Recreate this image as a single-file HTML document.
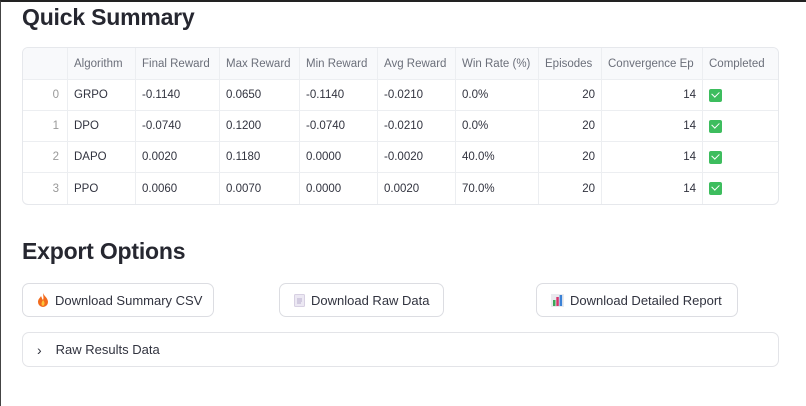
<!DOCTYPE html>
<html><head><meta charset="utf-8"><style>
*{box-sizing:border-box;margin:0;padding:0}
body{width:806px;height:406px;background:#fff;font-family:"Liberation Sans",sans-serif;color:#31333f;position:relative;overflow:hidden;border-top:2px solid #222;border-left:1px solid #444}
h1{position:absolute;left:21px;font-size:23px;font-weight:bold;color:#262730;letter-spacing:-0.2px}
table{position:absolute;left:21px;top:45px;border-collapse:separate;border-spacing:0;border:1px solid #e6e8ec;border-radius:6px;font-size:11.5px;overflow:hidden;width:755px;table-layout:fixed}
td,th{border-right:1px solid #eceef1;border-bottom:1px solid #eceef1;height:31px;padding:0 6px;text-align:left;white-space:nowrap;overflow:hidden}
th{font-weight:normal;color:#6b6f7a;background:#f8f9fb;height:32px}
tr:last-child td{border-bottom:none}
td:last-child,th:last-child{border-right:none}
.r{text-align:right}
.i{color:#999;text-align:right;padding-right:8px}
.ck{display:inline-block;width:13px;height:13px;background:#3dbd5e;border-radius:2px;position:relative;vertical-align:middle}
.ck:after{content:"";position:absolute;left:3px;top:2px;width:6px;height:4px;border-left:1.5px solid #fff;border-bottom:1.5px solid #fff;transform:rotate(-45deg)}
.btn{position:absolute;top:281px;height:34px;border:1px solid #dcdde2;border-radius:7px;font-size:13px;display:flex;align-items:center;padding-left:14px;gap:6px;color:#31333f}
.exp{position:absolute;left:21px;top:330px;width:757px;height:35px;border:1px solid #e3e4e8;border-radius:7px;font-size:13px;display:flex;align-items:center;padding-left:14px}
</style></head><body>
<h1 style="top:2px">Quick Summary</h1>
<table>
<colgroup><col style="width:45px"><col style="width:68px"><col style="width:84px"><col style="width:80px"><col style="width:78px"><col style="width:78px"><col style="width:83px"><col style="width:63px"><col style="width:101px"><col style="width:75px"></colgroup>
<tr><th></th><th>Algorithm</th><th>Final Reward</th><th>Max Reward</th><th>Min Reward</th><th>Avg Reward</th><th>Win Rate (%)</th><th>Episodes</th><th>Convergence Ep</th><th>Completed</th></tr>
<tr><td class="i">0</td><td>GRPO</td><td>-0.1140</td><td>0.0650</td><td>-0.1140</td><td>-0.0210</td><td>0.0%</td><td class="r">20</td><td class="r">14</td><td><span class="ck"></span></td></tr>
<tr><td class="i">1</td><td>DPO</td><td>-0.0740</td><td>0.1200</td><td>-0.0740</td><td>-0.0210</td><td>0.0%</td><td class="r">20</td><td class="r">14</td><td><span class="ck"></span></td></tr>
<tr><td class="i">2</td><td>DAPO</td><td>0.0020</td><td>0.1180</td><td>0.0000</td><td>-0.0020</td><td>40.0%</td><td class="r">20</td><td class="r">14</td><td><span class="ck"></span></td></tr>
<tr><td class="i">3</td><td>PPO</td><td>0.0060</td><td>0.0070</td><td>0.0000</td><td>0.0020</td><td>70.0%</td><td class="r">20</td><td class="r">14</td><td><span class="ck"></span></td></tr>
</table>
<h1 style="top:236px">Export Options</h1>
<div class="btn" style="left:21px;width:192px"><svg width="12" height="14" viewBox="0 0 12 14"><path d="M6 0C7 3 11 5 11 9A5 5 0 0 1 1 9C1 6 3 5 4 3C5 5 5 6 6 7C7 5 6 2 6 0Z" fill="#f26b1d"/><path d="M6 7C8 9 8 12 6 13C4 12 4 10 6 7Z" fill="#fcc33a"/></svg>Download Summary CSV</div>
<div class="btn" style="left:278px;width:165px"><svg width="11" height="13" viewBox="0 0 11 13"><rect x="0.5" y="0.5" width="10" height="12" rx="1" fill="#ece8f3" stroke="#d7d0e2"/><path d="M3 5H8M3 7H8M3 9H7" stroke="#b9aece"/></svg>Download Raw Data</div>
<div class="btn" style="left:535px;width:202px"><svg width="13" height="13" viewBox="0 0 13 13"><rect width="13" height="13" fill="#e9eaee"/><rect x="2" y="6" width="2.5" height="6" fill="#3aa757"/><rect x="5.3" y="3" width="2.5" height="9" fill="#d6336c"/><rect x="8.6" y="1" width="2.5" height="11" fill="#3b82d6"/></svg>Download Detailed Report</div>
<div class="exp"><span style="font-size:14px;margin-right:14px">›</span>Raw Results Data</div>
</body></html>
